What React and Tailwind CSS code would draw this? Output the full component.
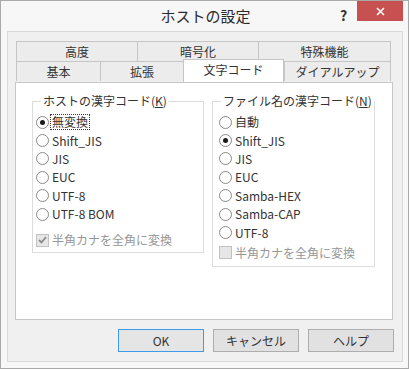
const FONT = { fontFamily: '"Noto Sans CJK JP", "Liberation Sans", sans-serif' }

function Radio({ checked, label, focus }) {
  return (
    <div className="flex items-center h-[18.4px]">
      <span className="w-[13px] h-[13px] rounded-full border border-[#8a8a8a] bg-white flex items-center justify-center shrink-0">
        {checked && <span className="w-[5px] h-[5px] rounded-full bg-[#1a1a1a]" />}
      </span>
      <span
        className={`ml-[2px] px-[1px] leading-[14px] text-[12px] text-[#333] whitespace-nowrap ${
          focus ? "outline outline-1 outline-dotted outline-[#333]" : ""
        }`}
      >
        {label}
      </span>
    </div>
  )
}

function Check({ checked }) {
  return (
    <div className="flex items-center h-[18px]">
      <span className="w-[13px] h-[13px] border border-[#c2c2c2] bg-[#e6e6e6] flex items-center justify-center shrink-0">
        {checked && (
          <svg width="9" height="8" viewBox="0 0 9 8">
            <path d="M1 4 L3.5 6.5 L8 1" fill="none" stroke="#8a8a8a" strokeWidth="1.8" />
          </svg>
        )}
      </span>
      <span className="ml-[3px] leading-[14px] text-[12px] text-[#969696] whitespace-nowrap">
        半角カナを全角に変換
      </span>
    </div>
  )
}

function Tab({ label, w, last }) {
  return (
    <div
      className={`h-[20px] border-t border-l border-[#c6c6c6] bg-[#ececec] flex items-center justify-center text-[12px] leading-[14px] text-[#333] whitespace-nowrap ${
        last ? "border-r" : ""
      }`}
      style={{ width: w }}
    >
      {label}
    </div>
  )
}

export default function App() {
  return (
    <div
      className="w-[409px] h-[369px] border border-[#a9a9a9] bg-[#f7f7f7] flex flex-col"
      style={FONT}
    >
      {/* Title bar */}
      <div className="h-[30px] flex items-start relative">
        <div className="flex-1 h-[30px] flex items-center justify-center text-[15px] text-[#2a2a2a] pl-[2px]">
          ホストの設定
        </div>
        <span className="absolute left-[339px] top-[4px] text-[14px] font-bold text-[#333]">?</span>
        <div className="absolute left-[356px] top-0 w-[46px] h-[20px] bg-[#c75050] flex items-center justify-center">
          <svg width="9" height="9" viewBox="0 0 9 9">
            <path d="M1 1 L8 8 M8 1 L1 8" stroke="#fff" strokeWidth="1.6" />
          </svg>
        </div>
      </div>

      {/* Client area */}
      <div className="ml-[6px] w-[396px] h-[331px] border border-[#d9d9d9] bg-[#f0f0f0] flex flex-col pt-[9px] pl-[7px]">
        {/* Tabs */}
        <div className="flex ml-[1px]">
          <Tab label="高度" w={121} />
          <Tab label="暗号化" w={121} />
          <Tab label="特殊機能" w={133} last />
        </div>
        <div className="flex ml-[1px] items-start">
          <Tab label="基本" w={84} />
          <Tab label="拡張" w={83} />
          <div className="relative z-10 -mt-[2px] w-[101px] h-[23px] border-t border-l border-r border-[#c6c6c6] bg-white flex items-start justify-center pt-[3px] text-[12px] leading-[14px] text-[#333]">
            文字コード
          </div>
          <Tab label="ダイアルアップ" w={107} last />
        </div>

        {/* Panel */}
        <div className="w-[378px] h-[238px] border border-[#c6c6c6] bg-white flex items-start pl-[16px] pt-[10px]">
          <fieldset className="w-[172px] h-[160px] border border-[#dcdcdc] pl-[3px]">
            <legend className="ml-[5px] px-[2px] text-[12px] leading-[16px] text-[#333] whitespace-nowrap">
              ホストの漢字コード(<u>K</u>)
            </legend>
            <div className="mt-[4px] flex flex-col">
              <Radio checked focus label="無変換" />
              <Radio label="Shift_JIS" />
              <Radio label="JIS" />
              <Radio label="EUC" />
              <Radio label="UTF-8" />
              <Radio label="UTF-8 BOM" />
              <div className="mt-[8px]">
                <Check checked />
              </div>
            </div>
          </fieldset>

          <fieldset className="ml-[8px] w-[159px] h-[174px] border border-[#dcdcdc] pl-[6px]">
            <legend className="ml-[2px] px-[2px] text-[12px] leading-[16px] text-[#333] whitespace-nowrap">
              ファイル名の漢字コード(<u>N</u>)
            </legend>
            <div className="mt-[4px] flex flex-col">
              <Radio label="自動" />
              <Radio checked label="Shift_JIS" />
              <Radio label="JIS" />
              <Radio label="EUC" />
              <Radio label="Samba-HEX" />
              <Radio label="Samba-CAP" />
              <Radio label="UTF-8" />
              <div className="mt-[2px]">
                <Check />
              </div>
            </div>
          </fieldset>
        </div>

        {/* Buttons */}
        <div className="flex mt-[9px] pl-[103px] gap-[9px]">
          <button className="w-[86px] h-[23px] border border-[#3d9be9] bg-[#e5e5e5] text-[12px] text-[#333]">
            OK
          </button>
          <button className="w-[86px] h-[23px] border border-[#adadad] bg-[#e1e1e1] text-[12px] text-[#333]">
            キャンセル
          </button>
          <button className="w-[86px] h-[23px] border border-[#adadad] bg-[#e1e1e1] text-[12px] text-[#333]">
            ヘルプ
          </button>
        </div>
      </div>
    </div>
  )
}
